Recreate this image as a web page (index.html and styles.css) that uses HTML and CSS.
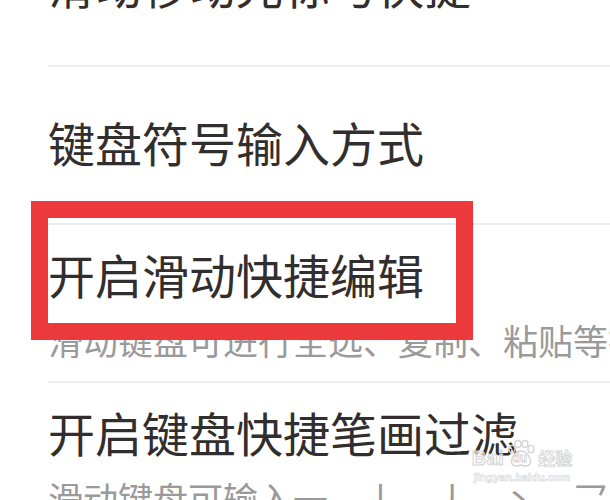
FILE: index.html
```html
<!DOCTYPE html>
<html lang="zh-CN">
<head>
<meta charset="utf-8">
<title>设置</title>
<link rel="stylesheet" href="styles.css">
</head>
<body>
<div class="list">
  <div class="item single">
    <div class="title">滑动移动光标与快捷</div>
  </div>
  <div class="item single">
    <div class="title">键盘符号输入方式</div>
  </div>
  <div class="item double">
    <div class="title">开启滑动快捷编辑</div>
    <div class="sub">滑动键盘可进行全选、复制、粘贴等操作</div>
  </div>
  <div class="item double">
    <div class="title">开启键盘快捷笔画过滤</div>
    <div class="sub">滑动键盘可输入一、丨、丿、丶、乛五种笔画</div>
  </div>
</div>

<div class="highlight"></div>

<div class="watermark">
  <div class="wm-logo">
    <span class="wm-bai">Bai</span>
    <span class="wm-paw">
      <svg width="30" height="28" viewBox="0 0 30 28">
        <g fill="none" stroke="#d4d4d4" stroke-width="1.4">
          <ellipse cx="6" cy="9" rx="3" ry="3.6"/>
          <ellipse cx="12" cy="4" rx="3" ry="3.4"/>
          <ellipse cx="19" cy="4" rx="3" ry="3.4"/>
          <ellipse cx="25" cy="9" rx="3" ry="3.6"/>
          <path d="M15 11 C9 11 4 19 6 24 C8 27 12 26 15 25 C18 26 22 27 24 24 C26 19 21 11 15 11 Z"/>
        </g>
      </svg>
      <span class="wm-du">du</span>
    </span>
    <span class="wm-jy">经验</span>
  </div>
  <div class="wm-url">jingyan.baidu.com</div>
</div>
</body>
</html>
```
FILE: styles.css
```css
html, body {
  margin: 0;
  padding: 0;
  overflow: hidden;
  background: #ffffff;
}

body {
  font-family: "Noto Sans CJK SC", "Noto Sans", sans-serif;
  width: 610px;
  height: 500px;
  position: relative;
}

.list {
  margin-top: -93px;
}

.item {
  margin-left: 48px;
  height: 158px;
  box-sizing: border-box;
  border-top: 2px solid #ececec;
  overflow: hidden;
}

.item.single {
  padding-top: 47px;
}

.item.double {
  padding-top: 21px;
}

.title {
  font-size: 47px;
  line-height: 56px;
  color: #322e2d;
  white-space: nowrap;
}

.sub {
  font-size: 35px;
  line-height: 42px;
  color: #9a9a9a;
  margin-top: 17px;
  white-space: nowrap;
}

.highlight {
  position: absolute;
  left: 31px;
  top: 201px;
  width: 442px;
  height: 139px;
  box-sizing: border-box;
  border: 17px solid #ec393b;
}

.watermark {
  position: absolute;
  left: 466px;
  top: 440px;
  width: 112px;
  display: flex;
  flex-direction: column;
  align-items: center;
}

.wm-logo {
  display: flex;
  align-items: flex-end;
  height: 28px;
}

.wm-bai {
  font-family: "Liberation Sans", sans-serif;
  font-size: 20px;
  line-height: 20px;
  font-weight: bold;
  color: rgba(255, 255, 255, 0.6);
  -webkit-text-stroke: 1px #d2d2d2;
  letter-spacing: 0.5px;
}

.wm-paw {
  position: relative;
  width: 30px;
  height: 28px;
  margin: 0 2px;
}

.wm-paw svg {
  display: block;
}

.wm-du {
  position: absolute;
  left: 6px;
  top: 12px;
  font-family: "Liberation Sans", sans-serif;
  font-size: 12px;
  line-height: 12px;
  font-weight: bold;
  color: rgba(255, 255, 255, 0.6);
  -webkit-text-stroke: 0.8px #d2d2d2;
}

.wm-jy {
  font-family: "Noto Sans CJK SC", sans-serif;
  font-size: 17px;
  line-height: 20px;
  font-weight: bold;
  color: rgba(255, 255, 255, 0.6);
  -webkit-text-stroke: 0.8px #d2d2d2;
}

.wm-url {
  font-family: "Liberation Sans", sans-serif;
  font-size: 11px;
  line-height: 13px;
  font-weight: bold;
  color: rgba(255, 255, 255, 0.6);
  -webkit-text-stroke: 0.6px #d6d6d6;
  margin-top: 3px;
}
```
